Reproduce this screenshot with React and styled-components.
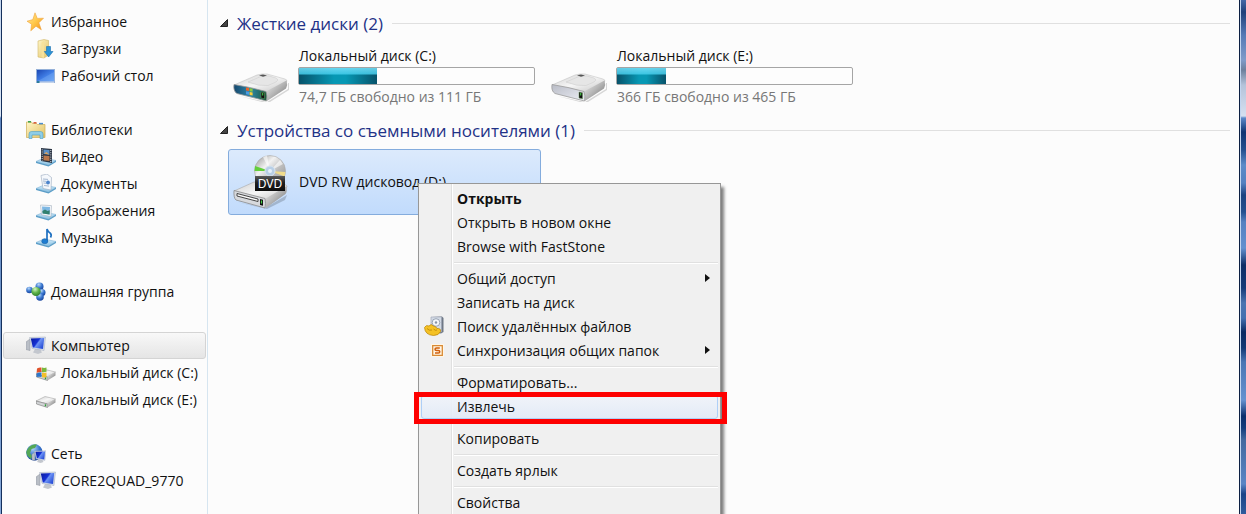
import React from 'react'
import styled, { createGlobalStyle, css } from 'styled-components'

const GlobalStyle = createGlobalStyle`
  * {
    box-sizing: border-box;
  }
  body {
    margin: 0;
    font-family: "Open Sans", "Noto Sans", sans-serif;
    font-size: 14px;
    color: #111;
    background-color: #fcfcfc;
  }
`
const Window = styled.div`
  display: flex;
  height: 100vh;
  overflow: hidden;
  background-color: #fcfcfc;
`
const LeftFrame = styled.div`
  flex: none;
  width: 2px;
  border-right: 1px solid #15305c;
  background: linear-gradient(#c5d6ee 0, #dbe6f5 116px, #5f86bf 118px, #86a8d8 100%);
`
const RightFrame = styled.div`
  flex: none;
  width: 7px;
  border-left: 1px solid #0c1f42;
  box-shadow: inset 1px 0 0 #c3d6f0;
  background: linear-gradient(
    #4468a6 0, #1f4079 12px, #5579b5 35px, #7f9bc9 60px, #6c7f9c 70px, #b4c3da 85px,
    #d5e0f0 116px, #5b88c8 118px, #0f3573 132px, #24508f 150px, #5c8bc8 165px, #5480c0 183px,
    #1c4280 195px, #24508f 212px, #5580c0 222px, #6290cf 248px, #0e2e66 265px, #153a78 288px,
    #4a74b0 303px, #4470b0 318px, #0a2a62 332px, #123874 348px, #4a75b3 362px, #6592d0 400px,
    #0a2e6c 416px, #143d7c 428px, #43699f 440px, #5a85c5 484px, #1a4488 494px, #2f5b9c 514px
  );
`
const Sidebar = styled.nav`
  flex: none;
  display: flex;
  flex-direction: column;
  gap: 27px;
  width: 206px;
  padding: 8px 1px 0;
  border-right: 1px solid #d6e5f0;
`
const NavGroup = styled.div`
  display: flex;
  flex-direction: column;
`
const NavItem = styled.a`
  display: flex;
  align-items: center;
  gap: 5px;
  height: 27px;
  padding-left: ${({ $sub }) => ($sub ? 32 : 22)}px;
  border: 1px solid transparent;
  border-radius: 3px;
  color: #111;
  text-decoration: none;
  white-space: nowrap;
  ${({ $selected }) => $selected && css`
    border-color: #d4d4d4;
    background: linear-gradient(#f8f8f8, #e5e5e5);
  `}
`
const NavIcon = styled.svg`
  flex: none;
  width: 20px;
  height: 20px;
`
const Main = styled.main`
  flex: 1;
  min-width: 0;
  display: flex;
  flex-direction: column;
  gap: 8px;
  padding: 9px 9px 0 12px;
`
const Section = styled.section`
  display: flex;
  flex-direction: column;
  gap: 5px;
`
const SectionTitle = styled.h2`
  display: flex;
  align-items: center;
  gap: 9px;
  height: 28px;
  margin: 0;
  font-size: 17px;
  font-weight: 400;
  color: #1f3287;
  white-space: nowrap;
  &::after {
    content: '';
    flex: 1;
    height: 1px;
    background-color: #e0e0e0;
  }
`
const Arrow = styled.svg`
  flex: none;
  width: 8px;
  height: 8px;
`
const Drives = styled.div`
  display: flex;
  gap: 5px;
  padding-left: 8px;
`
const Drive = styled.div`
  position: relative;
  flex: none;
  display: flex;
  align-items: center;
  gap: 9px;
  width: 313px;
  height: 66px;
  padding: 0 5px 0 4px;
  border: 1px solid transparent;
  border-radius: 3px;
  ${({ $selected }) => $selected && css`
    border-color: #84acdd;
    background: linear-gradient(#dceafc, #c1dbfc);
  `}
`
const DriveIcon = styled.svg`
  flex: none;
  width: 56px;
  height: 56px;
`
const DriveInfo = styled.div`
  flex: 1;
  display: flex;
  flex-direction: column;
  padding-top: 3px;
`
const DriveText = styled.span`
  padding-left: 1px;
  line-height: 20px;
  white-space: nowrap;
  color: ${({ $muted }) => ($muted ? '#777' : '#111')};
`
const Capacity = styled.div`
  height: 18px;
  margin: 1px 0 2px;
  border: 1px solid #a5a5a5;
  border-radius: 2px;
  background-color: #fdfdfd;
`
const Used = styled.div`
  height: 16px;
  background:
    linear-gradient(rgba(120, 225, 250, 0.85) 0, rgba(70, 205, 235, 0.85) 6px, transparent 7px),
    linear-gradient(90deg, #07526a, #0798b4 45%, #0798b4 60%, #07526a);
`
const Menu = styled.div`
  position: absolute;
  z-index: 1;
  top: 33px;
  left: 189px;
  width: 303px;
  padding: 3px 2px;
  border: 1px solid #979797;
  background: linear-gradient(90deg, transparent 32px, #e0e0e0 32px, #e0e0e0 33px, #fff 33px, #fff 34px, transparent 34px) #f0f0f0;
  box-shadow: 3px 4px 3px rgba(0, 0, 0, 0.5);
`
const MenuItem = styled.button`
  position: relative;
  display: grid;
  grid-template-columns: 35px 1fr 12px;
  align-items: center;
  width: 100%;
  height: 24px;
  padding: 0 0 2px;
  border: 1px solid transparent;
  border-radius: 3px;
  background: none;
  font-family: inherit;
  font-size: 14px;
  font-weight: ${({ $bold }) => ($bold ? 700 : 400)};
  color: #111;
  text-align: left;
  white-space: nowrap;
  ${({ $hover }) => $hover && css`
    border-color: #aecff7;
    background: linear-gradient(rgba(240, 244, 250, 0.9), rgba(226, 234, 247, 0.9));
  `}
`
const MenuIcon = styled.svg`
  width: 22px;
  height: 20px;
  margin-left: 1px;
`
const MenuArrow = styled.svg`
  width: 5px;
  height: 8px;
`
const Separator = styled.hr`
  height: 2px;
  margin: 3px 0 3px 33px;
  border: 0;
  border-top: 1px solid #e0e0e0;
  border-bottom: 1px solid #fff;
`
const Highlight = styled.span`
  position: absolute;
  inset: -4px -10px -6px -8px;
  border: 5px solid #fe0000;
  pointer-events: none;
`

const Gradients = () => (
  <svg width="0" height="0" style={{ position: 'absolute' }} aria-hidden="true">
    <defs>
      <linearGradient id="star" x1="0" y1="0" x2="1" y2="1">
        <stop offset="0" stopColor="#ffe9a0" /><stop offset=".5" stopColor="#ffc84a" /><stop offset="1" stopColor="#f08a18" />
      </linearGradient>
      <linearGradient id="folder" x1="0" y1="0" x2="1" y2="1">
        <stop offset="0" stopColor="#fff6c8" /><stop offset="1" stopColor="#e2c263" />
      </linearGradient>
      <linearGradient id="blue" x1="0" y1="0" x2="1" y2="1">
        <stop offset="0" stopColor="#1c48b4" /><stop offset=".5" stopColor="#3f7ce4" /><stop offset="1" stopColor="#6ea8f6" />
      </linearGradient>
      <linearGradient id="screen" x1="0" y1="0" x2="1" y2=".6">
        <stop offset="0" stopColor="#0a1a9c" /><stop offset=".5" stopColor="#1530d4" /><stop offset=".6" stopColor="#6d93f4" /><stop offset="1" stopColor="#2a50d8" />
      </linearGradient>
      <linearGradient id="tray" x1="0" y1="0" x2="0" y2="1">
        <stop offset="0" stopColor="#d8effb" /><stop offset="1" stopColor="#85bfe2" />
      </linearGradient>
      <radialGradient id="ballBlue" cx=".4" cy=".25" r=".8">
        <stop offset="0" stopColor="#b8d8fa" /><stop offset=".5" stopColor="#3b78cf" /><stop offset="1" stopColor="#123c96" />
      </radialGradient>
      <radialGradient id="ballGreen" cx=".4" cy=".25" r=".8">
        <stop offset="0" stopColor="#d6f6c4" /><stop offset=".5" stopColor="#5fb54a" /><stop offset="1" stopColor="#2b7a2a" />
      </radialGradient>
      <linearGradient id="top" x1="0" y1="0" x2="1" y2="1">
        <stop offset="0" stopColor="#cdcdcd" /><stop offset=".5" stopColor="#f6f6f6" /><stop offset="1" stopColor="#c4c4c4" />
      </linearGradient>
      <linearGradient id="side" x1="0" y1="0" x2="1" y2="1">
        <stop offset="0" stopColor="#f2f2f2" /><stop offset=".5" stopColor="#b4b4b4" /><stop offset="1" stopColor="#6c6c6c" />
      </linearGradient>
      <linearGradient id="front" x1="0" y1="0" x2="1" y2="1">
        <stop offset="0" stopColor="#b9bcc6" /><stop offset="1" stopColor="#eceef5" />
      </linearGradient>
      <linearGradient id="frontWin" x1="0" y1="0" x2="1" y2="0">
        <stop offset="0" stopColor="#16486e" /><stop offset=".5" stopColor="#2f86a8" /><stop offset="1" stopColor="#1c5a38" />
      </linearGradient>
      <linearGradient id="disc" x1="0" y1="0" x2="1" y2="1">
        <stop offset="0" stopColor="#8f8f8f" /><stop offset=".35" stopColor="#f2f2f2" /><stop offset=".6" stopColor="#bdbdbd" /><stop offset="1" stopColor="#8c8c8c" />
      </linearGradient>
      <linearGradient id="plate" x1="0" y1="0" x2="0" y2="1">
        <stop offset="0" stopColor="#5a5a5a" /><stop offset=".45" stopColor="#202020" /><stop offset="1" stopColor="#0c0c0c" />
      </linearGradient>
    </defs>
  </svg>
)

const Tray = () => (
  <>
    <path d="M0 14.5 8 11l12 2.5-7.5 4.5z" fill="url(#tray)" stroke="#7fb4d6" strokeWidth=".6" />
    <path d="M0 14.5 12.5 18v1.5L0 16zM12.5 18l7.5-4.5V15l-7.5 4.5z" fill="#5c9ec8" />
  </>
)

const Monitor = () => (
  <>
    <path d="m0 6 4-3v11.500l-4-1z" fill="#b9bec6" stroke="#8c929c" strokeWidth=".5" />
    <path d="M9 13h5l2 3.500-4 1.500-5-1.500z" fill="#c3c7ce" />
    <path d="m3.500 1.500 16-.5-1.500 13.500-12-2z" fill="#d5dcea" stroke="#a3acbd" strokeWidth=".5" />
    <path d="m4.800 2.500 13.400-.4-1.200 11-10.200-1.700z" fill="url(#screen)" />
  </>
)

const SmallDrive = () => (
  <>
    <path d="m0 11 9-4.500 10.500 2.500-8 5z" fill="url(#top)" stroke="#999" strokeWidth=".5" />
    <path d="m0 11 11.500 3v3.500L.5 14z" fill="#d2d4d6" stroke="#777" strokeWidth=".6" />
    <path d="m11.500 14 8-5v3.500l-8 5z" fill="url(#side)" />
    <path d="M9.500 14.300v2" stroke="#2c9b35" strokeWidth="1.400" />
  </>
)

const icons = {
  star: (
    <path d="m9 .8 2.300 5.600 6.200-.2-4.600 4.600 2.400 7-5.300-3.600-5.200 4.600.8-6.600L1 9.200l5.800-1.600z" fill="url(#star)" stroke="#f0a53c" strokeWidth=".6" />
  ),
  downloads: (
    <>
      <path d="m2 2 6-1.500 4.500 1V16L8 19l-6-1z" fill="url(#folder)" stroke="#d0b565" strokeWidth=".6" />
      <path d="M5.500 3.500 8 2v17l-2.500-.8z" fill="#f7e29b" />
      <path d="M10.500 7.500h4v5H17L12.600 18 8.300 12.500h2.200z" fill="#2b93d6" stroke="#1a6fb0" strokeWidth=".6" />
    </>
  ),
  desktop: (
    <>
      <path d="M0 3h19v14H0z" fill="#94b0d8" />
      <path d="M1 4h17v11.500H1z" fill="url(#blue)" />
      <path d="M1 15.500 18 6v9.500z" fill="#79acf5" opacity=".4" />
      <path d="M1 15.500h17V17H1z" fill="#c4d3ea" />
      <path d="M1 15h2.500v2H1z" fill="#2d7d9b" />
    </>
  ),
  libraries: (
    <>
      <path d="M.5 2h5l1 1.500h4l1 1h7.500v13H.5z" fill="url(#folder)" stroke="#cfae55" strokeWidth=".7" />
      <path d="M2 1.800h3" stroke="#35a24a" strokeWidth="1.500" />
      <path d="M7.500 2.800h3" stroke="#d85c3a" strokeWidth="1.500" />
      <path d="M13 3.600h4" stroke="#4c8fd0" strokeWidth="1.500" />
      <path d="M3 18.500V14q0-2.500 2.500-2.500h9Q17 11.500 17 14v4.500h-3V15H6v3.500z" fill="#8fcde6" stroke="#4f9fc4" strokeWidth=".6" />
    </>
  ),
  video: (
    <>
      <Tray />
      <path d="m5 1 11 1v14L5 14z" fill="#2b3442" />
      <path d="m7.500 2.500 6 .6v4.600l-6-.6z" fill="#5a8fc6" />
      <path d="m7.500 8.500 6 .6v5l-6-.8z" fill="#b9764a" />
      <path d="M8 6.500 10.500 5l3 2.700z" fill="#dca35c" />
      <path d="M6.200 2.300v11.500M14.800 3v12.500" stroke="#d7dde6" strokeDasharray="1 1.200" />
    </>
  ),
  documents: (
    <>
      <Tray />
      <path d="M5 1.500 11 0l4.500 3.500L15 16l-8-1.500z" fill="#f5f8fc" stroke="#9aa9bd" strokeWidth=".6" />
      <path d="m7 5 5 .4M7 7l3 .3M7.500 9l3 .3M8 11.500l5 .6" stroke="#8fa6c4" strokeWidth=".8" />
      <circle cx="12" cy="8.500" r="1.900" fill="#4b83cb" />
    </>
  ),
  pictures: (
    <>
      <Tray />
      <path d="m4.500 4 11 .6-.5 11-9.500-1.800z" fill="#f4f7fa" stroke="#a4b0be" strokeWidth=".6" />
      <path d="m6 5.500 8 .5-.4 7.500-7-1z" fill="#7fb8e4" />
      <path d="m6.400 10 2.600-1.500 2.500 1.600 2.200-.8-.1 4.200-7-1z" fill="#32806f" />
    </>
  ),
  music: (
    <>
      <Tray />
      <path d="M11 13V1q1 3 3.300 4.200 1.700 1.800.2 4.300" fill="none" stroke="#1d6fc0" strokeWidth="1.700" />
      <ellipse cx="8.800" cy="13.200" rx="3.100" ry="2.500" fill="#1d7cd0" stroke="#155a9e" strokeWidth=".5" />
    </>
  ),
  homegroup: (
    <>
      <circle cx="3.500" cy="8" r="3.300" fill="url(#ballBlue)" />
      <circle cx="13.500" cy="4.500" r="4" fill="url(#ballBlue)" />
      <circle cx="16" cy="10.500" r="3.500" fill="url(#ballBlue)" />
      <circle cx="14" cy="15" r="3.800" fill="url(#ballBlue)" />
      <circle cx="10" cy="9.500" r="4.600" fill="url(#ballGreen)" />
    </>
  ),
  computer: <Monitor />,
  driveWin: (
    <>
      <SmallDrive />
      <path d="M1 5.500q2.500-1.500 4.500-1V9Q3 8.500.6 10z" fill="#e0532c" />
      <path d="M6 4.500q2 .8 4.500 0v4.300Q8 9.500 6 9z" fill="#7ab83e" />
      <path d="M.6 10.500Q3 9.200 5.500 9.600V14Q3 13.500.6 14z" fill="#2f76c8" />
      <path d="M6 9.600q2 .6 4.500 0V14Q8 15 6 14.200z" fill="#f3bf2c" />
    </>
  ),
  drive: <SmallDrive />,
  network: (
    <>
      <circle cx="8.500" cy="8.500" r="8.300" fill="url(#ballBlue)" />
      <path d="M3 3q4-3.500 8-2.500L9 4 5.500 5 4 9l2 3-1 3Q-.5 11 .5 7z" fill="#54a856" />
      <g transform="translate(6 6) scale(.72)"><Monitor /></g>
    </>
  ),
  recover: (
    <>
      <path d="m9 1 10-.5 1.500 1.500v14L18 17.500 9 16z" fill="#6f7886" />
      <path d="M8 1h10.500v15H8z" fill="#d3dae5" stroke="#9aa3b2" strokeWidth=".6" />
      <circle cx="13" cy="6.500" r="3.800" fill="#f3f6fa" stroke="#8793a6" strokeWidth=".8" />
      <circle cx="13" cy="6.500" r="1.200" fill="#8793a6" />
      <path d="M1.500 11.500Q3 8.500 6 10q2-3 4.500 0 3 .5 3.500 2.500 4-.5 3.500 3-1.500 4-7 4Q2 19 1.500 11.500z" fill="#f4c124" stroke="#b98305" strokeWidth=".7" />
      <path d="M4 12.500q2 2.500 5 1.500m1.500-1q2 2 3.500 1" fill="none" stroke="#b98305" strokeWidth=".8" />
    </>
  ),
  sync: (
    <>
      <path d="M8 4h13v13H8z" fill="#fff6e6" />
      <path d="M9.700 5.700h9.600v9.600H9.700z" fill="none" stroke="#d98a35" strokeWidth="1.300" />
      <path d="M16.800 8h-3.300q-1.500 0-1.500 1.200t1.500 1.200h1.800q1.500 0 1.500 1.300T15.300 13H12" fill="none" stroke="#d2600c" strokeWidth="1.500" />
    </>
  )
}

const HardDisk = ({ system }) => (
  <DriveIcon viewBox="0 0 56 56">
    <path d="m6 49 28 6 21-13v-6h1v7l-19 12h-8z" fill="#000" opacity=".15" />
    <path d="m1 38 23-10q5-1.500 10-1l18 5q3 1 1.500 3L34 45z" fill="url(#top)" stroke="#bdbdbd" strokeWidth=".5" />
    <path d="m15 35 14-6q7-1 14 2 4 2-1 4.500l-7 3q-9 1-20-3.500z" fill="#e6e6e6" stroke="#cfcfcf" strokeWidth=".6" />
    <path d="m26 28.300 4-.8 4 1-4 1.200z" fill="#555" />
    <path d="m33 44.500 20.500-11q1.500 4-.5 8L34 54z" fill="url(#side)" />
    <path d="M1 37.500Q17 40 33 44.500q1.500 4 .5 9.500L4 46.500Q0 44 1 37.500z" fill={system ? 'url(#frontWin)' : 'url(#front)'} stroke="#9a9a9a" strokeWidth=".8" />
    <path d="m28 45 3.500.8v6l-3.500-.8z" fill="#111" stroke="#6a9a5a" strokeWidth=".5" />
    <path d="M29.700 46v2.500" stroke="#44cf44" strokeWidth="1.100" />
    {system && (
      <>
        <path d="m13 40.600 3 .5v3l-3-.6z" fill="#e8642c" />
        <path d="m16.600 41.200 3 .6v3l-3-.6z" fill="#8bc940" />
        <path d="m13 44.200 3 .6v3l-3-.6z" fill="#4a9be4" />
        <path d="m16.600 44.900 3 .6v3l-3-.6z" fill="#fbd039" />
      </>
    )}
  </DriveIcon>
)

const DvdDrive = () => (
  <DriveIcon viewBox="0 0 56 56">
    <path d="m4 48 28 6 22-13-2 5-18 9z" fill="#000" opacity=".18" />
    <circle cx="37" cy="17" r="15.500" fill="url(#disc)" stroke="#a9a9a9" strokeWidth=".6" />
    <path d="M37 17 22 12l-.5 5z" fill="#63cf3c" />
    <path d="m37 17 14.500 5.500 1-4.500z" fill="#f0dc8c" />
    <path d="m37 17-7-14 4-1.500zM37 17l10-11 3 4z" fill="#fff" opacity=".6" />
    <circle cx="37" cy="17" r="5" fill="#b8cfe6" stroke="#d9e4ef" />
    <circle cx="37" cy="17" r="2" fill="#e8f1fb" />
    <path d="m1 37 20-9 32 3q2 1 0 3L32 46z" fill="url(#top)" stroke="#a8a8a8" strokeWidth=".6" />
    <path d="m32 45 21.500-13q1 5-1 8L33 54z" fill="url(#side)" />
    <path d="M1 36.500 32 44.500q1 5 0 9.500L3 46Q.5 44 1 36.500z" fill="#d7d9dd" stroke="#8a8a8a" strokeWidth=".8" />
    <path d="m4 39.500 21 5.500v2.500L4 42z" fill="#fafafa" stroke="#333" strokeWidth=".9" />
    <path d="m27 45 3 .8v6l-3-.8z" fill="#111" />
    <path d="M28.500 46.500v3" stroke="#44cf44" strokeWidth="1.200" />
    <path d="M22 22h30v15H22z" fill="url(#plate)" />
    <text x="37" y="34" textAnchor="middle" fontFamily="Noto Sans, sans-serif" fontSize="12" fill="#fff">DVD</text>
  </DriveIcon>
)

const nav = [
  [
    { icon: 'star', label: 'Избранное' },
    { icon: 'downloads', label: 'Загрузки', sub: true },
    { icon: 'desktop', label: 'Рабочий стол', sub: true }
  ],
  [
    { icon: 'libraries', label: 'Библиотеки' },
    { icon: 'video', label: 'Видео', sub: true },
    { icon: 'documents', label: 'Документы', sub: true },
    { icon: 'pictures', label: 'Изображения', sub: true },
    { icon: 'music', label: 'Музыка', sub: true }
  ],
  [{ icon: 'homegroup', label: 'Домашняя группа' }],
  [
    { icon: 'computer', label: 'Компьютер', selected: true },
    { icon: 'driveWin', label: 'Локальный диск (C:)', sub: true },
    { icon: 'drive', label: 'Локальный диск (E:)', sub: true }
  ],
  [
    { icon: 'network', label: 'Сеть' },
    { icon: 'computer', label: 'CORE2QUAD_9770', sub: true }
  ]
]

const disks = [
  { name: 'Локальный диск (C:)', used: 33, free: '74,7 ГБ свободно из 111 ГБ', system: true },
  { name: 'Локальный диск (E:)', used: 21, free: '366 ГБ свободно из 465 ГБ' }
]

const menu = [
  [{ label: 'Открыть', bold: true }, { label: 'Открыть в новом окне' }, { label: 'Browse with FastStone' }],
  [
    { label: 'Общий доступ', more: true },
    { label: 'Записать на диск' },
    { label: 'Поиск удалённых файлов', icon: 'recover' },
    { label: 'Синхронизация общих папок', icon: 'sync', more: true }
  ],
  [{ label: 'Форматировать...' }, { label: 'Извлечь', hover: true }],
  [{ label: 'Копировать' }],
  [{ label: 'Создать ярлык' }],
  [{ label: 'Свойства' }]
]

function Title({ children }) {
  return (
    <SectionTitle>
      <Arrow viewBox="0 0 8 8"><path d="M7.500.5v7H.5z" fill="#444" stroke="#222" /></Arrow>
      <span>{children}</span>
    </SectionTitle>
  )
}

function ContextMenu() {
  return (
    <Menu role="menu">
      {menu.map((group, i) => (
        <React.Fragment key={i}>
          {i > 0 && <Separator />}
          {group.map((item) => (
            <MenuItem key={item.label} type="button" role="menuitem" $bold={item.bold} $hover={item.hover}>
              {item.icon ? <MenuIcon viewBox="0 0 22 20">{icons[item.icon]}</MenuIcon> : <span />}
              <span>{item.label}</span>
              {item.more && <MenuArrow viewBox="0 0 5 8"><path d="m0 0 5 4-5 4z" fill="#111" /></MenuArrow>}
              {item.hover && <Highlight />}
            </MenuItem>
          ))}
        </React.Fragment>
      ))}
    </Menu>
  )
}

function App() {
  return (
    <Window>
      <GlobalStyle />
      <Gradients />
      <LeftFrame />
      <Sidebar>
        {nav.map((group) => (
          <NavGroup key={group[0].label}>
            {group.map((item) => (
              <NavItem key={item.label} href="#" $sub={item.sub} $selected={item.selected}>
                <NavIcon viewBox="0 0 20 20">{icons[item.icon]}</NavIcon>
                {item.label}
              </NavItem>
            ))}
          </NavGroup>
        ))}
      </Sidebar>
      <Main>
        <Section>
          <Title>Жесткие диски (2)</Title>
          <Drives>
            {disks.map((disk) => (
              <Drive key={disk.name}>
                <HardDisk system={disk.system} />
                <DriveInfo>
                  <DriveText>{disk.name}</DriveText>
                  <Capacity><Used style={{ width: `${disk.used}%` }} /></Capacity>
                  <DriveText $muted>{disk.free}</DriveText>
                </DriveInfo>
              </Drive>
            ))}
          </Drives>
        </Section>
        <Section>
          <Title>Устройства со съемными носителями (1)</Title>
          <Drives>
            <Drive $selected>
              <DvdDrive />
              <DriveText>DVD RW дисковод (D:)</DriveText>
              <ContextMenu />
            </Drive>
          </Drives>
        </Section>
      </Main>
      <RightFrame />
    </Window>
  )
}

export default App
